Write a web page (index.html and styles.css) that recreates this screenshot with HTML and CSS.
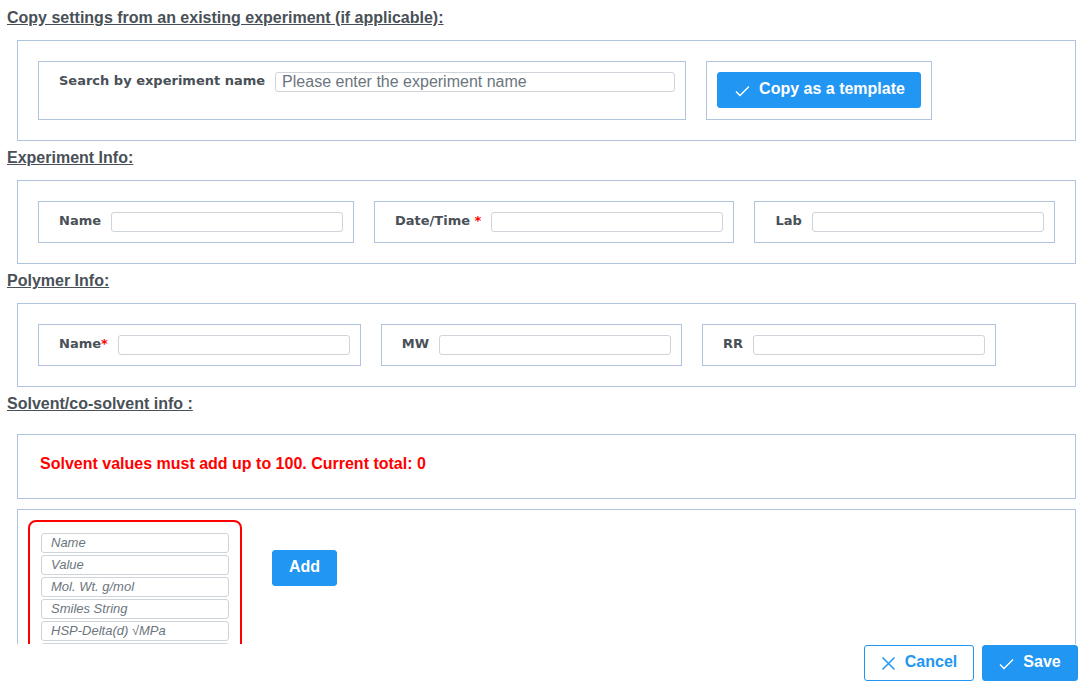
FILE: index.html
```html
<!DOCTYPE html>
<html lang="en">
<head>
<meta charset="utf-8">
<title>New experiment</title>
<link rel="stylesheet" href="styles.css">
</head>
<body>
<div class="scroll">
  <h2 class="section-title section-title-first">Copy settings from an existing experiment (if applicable):</h2>
  <div class="panel">
    <div class="row">
      <div class="field field-search">
        <label class="field-label">Search by experiment name</label>
        <input class="text-input search-input" type="text" placeholder="Please enter the experiment name">
      </div>
      <div class="field field-button">
        <button class="btn btn-primary btn-template" type="button">
          <svg class="icon" width="15" height="12" viewBox="0 0 15 12"><polyline points="1,6.5 5,10.5 14,1.5" fill="none" stroke="#fff" stroke-width="1.4"/></svg>
          <span>Copy as a template</span>
        </button>
      </div>
    </div>
  </div>

  <h2 class="section-title">Experiment Info:</h2>
  <div class="panel">
    <div class="row">
      <div class="field">
        <label class="field-label">Name</label>
        <input class="text-input" type="text">
      </div>
      <div class="field">
        <label class="field-label">Date/Time <span class="req">*</span></label>
        <input class="text-input" type="text">
      </div>
      <div class="field">
        <label class="field-label">Lab</label>
        <input class="text-input" type="text">
      </div>
    </div>
  </div>

  <h2 class="section-title">Polymer Info:</h2>
  <div class="panel">
    <div class="row">
      <div class="field">
        <label class="field-label">Name<span class="req">*</span></label>
        <input class="text-input" type="text">
      </div>
      <div class="field">
        <label class="field-label">MW</label>
        <input class="text-input" type="text">
      </div>
      <div class="field">
        <label class="field-label">RR</label>
        <input class="text-input" type="text">
      </div>
    </div>
  </div>

  <h2 class="section-title">Solvent/co-solvent info :</h2>
  <div class="panel panel-message">
    <p class="error-text">Solvent values must add up to 100. Current total: 0</p>
  </div>
  <div class="panel panel-solvent">
    <div class="solvent-card">
      <input class="small-input" type="text" placeholder="Name">
      <input class="small-input" type="text" placeholder="Value">
      <input class="small-input" type="text" placeholder="Mol. Wt. g/mol">
      <input class="small-input" type="text" placeholder="Smiles String">
      <input class="small-input" type="text" placeholder="HSP-Delta(d) √MPa">
      <input class="small-input" type="text" placeholder="HSP-Delta(p) √MPa">
      <input class="small-input" type="text" placeholder="HSP-Delta(h) √MPa">
    </div>
    <button class="btn btn-primary btn-add" type="button">Add</button>
  </div>
</div>
<div class="footer">
  <button class="btn btn-outline" type="button">
    <svg class="icon" width="15" height="15" viewBox="0 0 15 15"><path d="M1.5 1.5 L13.5 13.5 M13.5 1.5 L1.5 13.5" fill="none" stroke="#2196f3" stroke-width="1.5"/></svg>
    <span>Cancel</span>
  </button>
  <button class="btn btn-primary btn-save" type="button">
    <svg class="icon" width="15" height="12" viewBox="0 0 15 12"><polyline points="1,6.5 5,10.5 14,1.5" fill="none" stroke="#fff" stroke-width="1.4"/></svg>
    <span>Save</span>
  </button>
</div>
</body>
</html>
```
FILE: styles.css
```css
* { box-sizing: border-box; }

html, body {
  margin: 0;
  padding: 0;
  background: #fff;
  font-family: "Liberation Sans", Arial, sans-serif;
}

.scroll {
  height: 644px;
  overflow: hidden;
  padding: 0 9px 0 7px;
}

.section-title {
  margin: 8px 0 13px;
  font-size: 16px;
  line-height: 18px;
  font-weight: bold;
  color: #495057;
  text-decoration: underline;
}

.section-title-first { margin-top: 9px; }

.panel {
  margin-left: 10px;
  border: 1px solid #b0c4de;
  padding: 20px;
}

.row {
  display: flex;
  align-items: stretch;
  gap: 20px;
}

.field {
  border: 1px solid #b0c4de;
  padding: 10px 10px 10px 20px;
  display: flex;
  align-items: flex-start;
  gap: 10px;
}

.field-label {
  font-family: "DejaVu Sans", sans-serif;
  font-weight: bold;
  font-size: 13px;
  line-height: 18px;
  color: #495057;
  white-space: nowrap;
}

.req { color: #ff0000; }

.text-input {
  width: 232px;
  height: 20px;
  border: 1px solid #ced4da;
  border-radius: 3px;
  padding: 0 6px;
  font-family: "Liberation Sans", Arial, sans-serif;
  font-size: 16px;
  outline: none;
}

.search-input { width: 400px; }

.text-input::placeholder { color: #6c757d; }

.field-button {
  padding: 10px 10px 11px;
}

.btn {
  display: inline-flex;
  align-items: center;
  justify-content: center;
  height: 36px;
  border-radius: 3px;
  font-family: "Liberation Sans", Arial, sans-serif;
  font-weight: bold;
  font-size: 16px;
  white-space: nowrap;
  cursor: pointer;
}

.btn-primary {
  background: #2196f3;
  border: 1px solid #2196f3;
  color: #fff;
}

.btn-template {
  padding: 0 15px 2px 17px;
  gap: 9px;
}

.btn-template .icon { margin-top: 4px; }

.panel-message {
  margin-top: 21px;
  padding: 20px 20px 25px 22px;
}

.error-text {
  margin: 0;
  font-size: 16px;
  line-height: 18px;
  font-weight: bold;
  color: #ff0000;
}

.panel-solvent {
  margin-top: 10px;
  padding: 10px;
  display: flex;
  align-items: flex-start;
  gap: 30px;
}

.solvent-card {
  width: 214px;
  border: 2px solid #ff0000;
  border-radius: 8px;
  padding: 11px;
  display: flex;
  flex-direction: column;
  gap: 2px;
}

.small-input {
  width: 188px;
  height: 20px;
  border: 1px solid #ced4da;
  border-radius: 3px;
  padding: 0 9px 2px;
  font-family: "Liberation Sans", Arial, sans-serif;
  font-size: 13px;
  font-style: italic;
  outline: none;
}

.small-input::placeholder { color: #6c757d; }

.btn-add {
  margin-top: 30px;
  width: 65px;
  padding: 0 0 2px;
}

.footer {
  display: flex;
  justify-content: flex-end;
  gap: 8px;
  padding: 1px 7px 0 0;
}

.btn-outline {
  width: 110px;
  background: #fff;
  border: 1px solid #2196f3;
  color: #2196f3;
  gap: 9px;
  padding: 0 0 2px;
}

.btn-outline .icon { margin-top: 3px; }

.btn-save {
  width: 96px;
  gap: 9px;
  padding: 0 0 2px;
}

.btn-save .icon { margin-top: 4px; }
```
